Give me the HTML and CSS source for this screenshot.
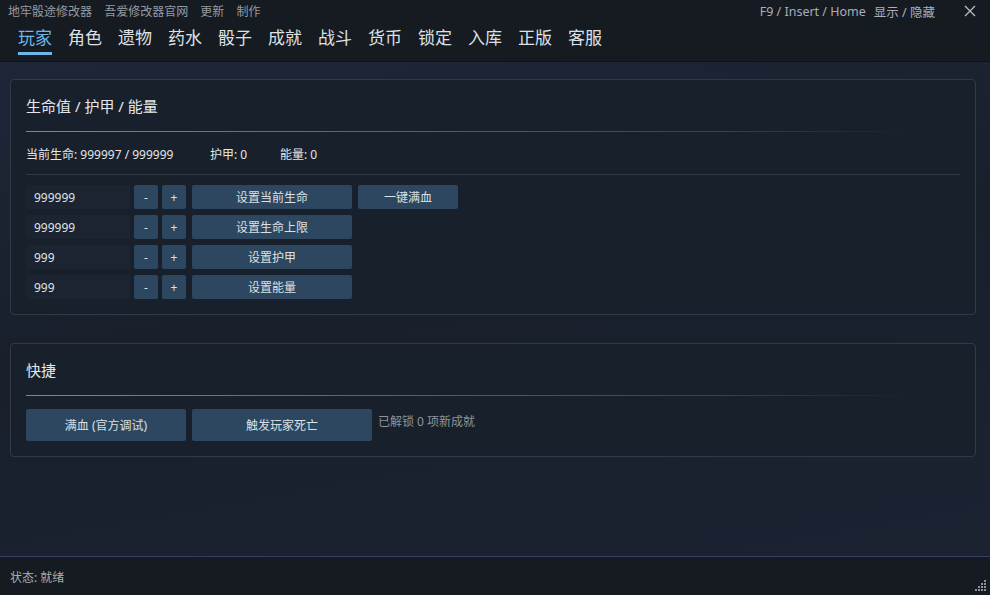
FILE: index.html
```html
<!DOCTYPE html>
<html lang="zh-CN">
<head>
    <meta charset="UTF-8">
    <title>地牢骰途修改器</title>
    <link rel="stylesheet" href="styles.css">
</head>
<body>
    <div class="app">
        <div class="header">
            <div class="topbar">
                <div class="links">
                    <span>地牢骰途修改器</span>
                    <span>吾爱修改器官网</span>
                    <span>更新</span>
                    <span>制作</span>
                </div>
                <div class="hotkey">
                    <span>F9 / Insert / Home</span>
                    <span>显示 / 隐藏</span>
                    <span class="close">
                        <svg width="12" height="12" viewBox="0 0 12 12"><path d="M1 1L11 11M11 1L1 11" stroke="#b8bec6" stroke-width="1.3"/></svg>
                    </span>
                </div>
            </div>
            <div class="tabs">
                <span class="tab active">玩家</span>
                <span class="tab">角色</span>
                <span class="tab">遗物</span>
                <span class="tab">药水</span>
                <span class="tab">骰子</span>
                <span class="tab">成就</span>
                <span class="tab">战斗</span>
                <span class="tab">货币</span>
                <span class="tab">锁定</span>
                <span class="tab">入库</span>
                <span class="tab">正版</span>
                <span class="tab">客服</span>
            </div>
        </div>

        <div class="content">
            <div class="card">
                <div class="card-title">生命值 / 护甲 / 能量</div>
                <div class="title-line"></div>
                <div class="info">
                    <span class="info-hp">当前生命: 999997 / 999999</span>
                    <span class="info-armor">护甲: 0</span>
                    <span>能量: 0</span>
                </div>
                <div class="sep"></div>
                <div class="rows">
                    <div class="row">
                        <input type="text" class="field" value="999999">
                        <button class="btn small">-</button>
                        <button class="btn small">+</button>
                        <button class="btn wide">设置当前生命</button>
                        <button class="btn mid">一键满血</button>
                    </div>
                    <div class="row">
                        <input type="text" class="field" value="999999">
                        <button class="btn small">-</button>
                        <button class="btn small">+</button>
                        <button class="btn wide">设置生命上限</button>
                    </div>
                    <div class="row">
                        <input type="text" class="field" value="999">
                        <button class="btn small">-</button>
                        <button class="btn small">+</button>
                        <button class="btn wide">设置护甲</button>
                    </div>
                    <div class="row">
                        <input type="text" class="field" value="999">
                        <button class="btn small">-</button>
                        <button class="btn small">+</button>
                        <button class="btn wide">设置能量</button>
                    </div>
                </div>
            </div>

            <div class="card quick">
                <div class="card-title">快捷</div>
                <div class="title-line"></div>
                <div class="row quick-row">
                    <button class="btn big">满血 (官方调试)</button>
                    <button class="btn bigger">触发玩家死亡</button>
                    <span class="note">已解锁 0 项新成就</span>
                </div>
            </div>
        </div>

        <div class="status">
            <span>状态: 就绪</span>
            <svg class="grip" width="12" height="12" viewBox="0 0 12 12">
                <rect x="9" y="0" width="2" height="2" fill="#8a9098"/>
                <rect x="6" y="3" width="2" height="2" fill="#8a9098"/>
                <rect x="9" y="3" width="2" height="2" fill="#8a9098"/>
                <rect x="3" y="6" width="2" height="2" fill="#8a9098"/>
                <rect x="6" y="6" width="2" height="2" fill="#8a9098"/>
                <rect x="9" y="6" width="2" height="2" fill="#8a9098"/>
                <rect x="0" y="9" width="2" height="2" fill="#8a9098"/>
                <rect x="3" y="9" width="2" height="2" fill="#8a9098"/>
                <rect x="6" y="9" width="2" height="2" fill="#8a9098"/>
                <rect x="9" y="9" width="2" height="2" fill="#8a9098"/>
            </svg>
        </div>
    </div>
</body>
</html>
```

FILE: styles.css
```css
body {
    margin: 0;
    padding: 0;
    background-color: #161a21;
    font-family: "Noto Sans", "Noto Sans CJK SC", sans-serif;
    color: #d6dbe1;
}
.app {
    width: 990px;
    height: 595px;
    display: flex;
    flex-direction: column;
    overflow: hidden;
}
.header {
    background-color: #161a21;
    border-bottom: 1px solid #0f1217;
    height: 62px;
    box-sizing: border-box;
}
.topbar {
    display: flex;
    justify-content: space-between;
    align-items: center;
    height: 22px;
    padding: 0 14px 0 8px;
    font-size: 12px;
    color: #959ba3;
}
.links span {
    margin-right: 9px;
}
.hotkey {
    display: flex;
    align-items: center;
    color: #a9afb7;
    font-size: 12.5px;
}
.hotkey span {
    margin-left: 8px;
}
.hotkey .close {
    margin-left: 29px;
    display: flex;
}
.tabs {
    display: flex;
    gap: 16px;
    padding-left: 18px;
    height: 40px;
}
.tab {
    font-size: 17px;
    line-height: 22px;
    padding-top: 5px;
    color: #dde1e6;
    height: 25px;
    border-bottom: 3px solid transparent;
}
.tab.active {
    color: #6db7e9;
    border-bottom-color: #6db7e9;
}
.content {
    flex: 1;
    background: linear-gradient(170deg, #1d2738 0%, #19202c 45%, #1b2231 100%);
    padding: 17px 14px 0 10px;
    display: flex;
    flex-direction: column;
    gap: 28px;
}
.card {
    border: 1px solid #2f3b4b;
    border-radius: 4px;
    background-color: #18202b;
    padding: 15px 15px 14px 15px;
}
.card.quick {
    padding-top: 15px;
    padding-bottom: 15px;
}
.card-title {
    font-size: 15px;
    line-height: 22px;
    color: #e4e8ec;
}
.title-line {
    height: 1px;
    margin: 14px 48px 0 0;
    background: linear-gradient(90deg, #5b90c2 0%, #45688c 40%, #2d4157 80%, rgba(45, 65, 87, 0) 100%);
}
.info {
    display: flex;
    font-size: 12px;
    line-height: 16px;
    margin-top: 15px;
    color: #e2e6ea;
}
.info-hp {
    width: 184px;
}
.info-armor {
    width: 70px;
}
.sep {
    height: 1px;
    background-color: #2e3a4a;
    margin: 11px 0 10px 0;
}
.rows {
    display: flex;
    flex-direction: column;
    gap: 6px;
}
.row {
    display: flex;
    align-items: center;
    gap: 4px;
}
.field {
    width: 104px;
    height: 24px;
    box-sizing: border-box;
    border: none;
    border-radius: 2px;
    background-color: #1c2431;
    color: #dfe3e7;
    font-family: "Noto Sans", sans-serif;
    font-size: 12px;
    padding: 0 8px;
}
.btn {
    height: 24px;
    border: none;
    border-radius: 2px;
    background-color: #2c475f;
    color: #dbe0e5;
    font-family: "Noto Sans", "Noto Sans CJK SC", sans-serif;
    font-size: 12px;
    padding: 0;
    cursor: pointer;
}
.btn:hover {
    background-color: #355571;
}
.btn.small {
    width: 24px;
}
.btn.wide {
    width: 160px;
    margin-left: 2px;
}
.btn.mid {
    width: 100px;
    margin-left: 2px;
}
.rows {
    margin-bottom: 1px;
}
.quick-row {
    margin-top: 13px;
    gap: 6px;
}
.btn.big {
    width: 160px;
    height: 32px;
}
.btn.bigger {
    width: 180px;
    height: 32px;
}
.note {
    font-size: 12px;
    color: #8d949c;
    margin-top: -8px;
}
.status {
    height: 39px;
    border-top: 1px solid #393c66;
    background-color: #161a21;
    display: flex;
    align-items: center;
    justify-content: space-between;
    padding: 2px 3px 0 10px;
    font-size: 12px;
    color: #a9afb7;
    box-sizing: border-box;
}
.grip {
    align-self: flex-end;
    margin-bottom: 3px;
}
```
